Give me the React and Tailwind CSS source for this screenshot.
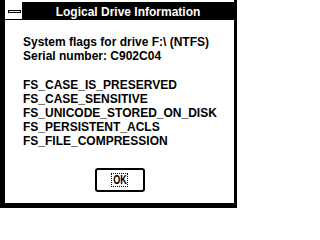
export default function App() {
  const flags = [
    "FS_CASE_IS_PRESERVED",
    "FS_CASE_SENSITIVE",
    "FS_UNICODE_STORED_ON_DISK",
    "FS_PERSISTENT_ACLS",
    "FS_FILE_COMPRESSION",
  ];
  return (
    <div
      className="w-[237px] h-[208px] bg-black pl-[5px] pr-[3px] pb-[5px] flex flex-col"
      style={{ fontFamily: '"Liberation Sans", Arial, sans-serif' }}
    >
      <div className="flex-1 bg-white flex flex-col">
        <div className="h-[20px] flex border-b border-black">
          <div className="w-[17px] h-full relative">
            <div className="absolute left-[3px] top-[10px] w-[13px] h-[3px] border border-black bg-white" />
          </div>
          <div className="flex-1 mt-[2px] bg-black text-white text-[12px] font-bold leading-[14px] pt-[3px] text-center">
            Logical Drive Information
          </div>
        </div>
        <div className="px-[18px] pt-[15px] text-[12px] font-bold leading-[14px] text-black whitespace-nowrap flex flex-col">
          <div>System flags for drive F:\ (NTFS)</div>
          <div>Serial number: C902C04</div>
          <div className="h-[15px]" />
          {flags.map((f) => (
            <div key={f}>{f}</div>
          ))}
        </div>
        <div className="flex justify-center mt-[20px]">
          <div className="w-[50px] h-[24px] border-2 border-black rounded-[3px] flex items-center justify-center">
            <div className="w-[17px] h-[14px] border border-dotted border-black flex items-center justify-center">
              <span className="text-[12px] font-bold leading-[12px] scale-x-75 inline-block">OK</span>
            </div>
          </div>
        </div>
      </div>
    </div>
  );
}
